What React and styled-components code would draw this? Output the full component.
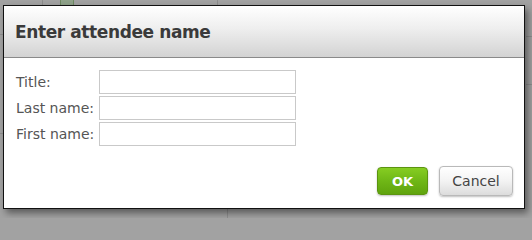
import React from 'react'
import styled, { createGlobalStyle } from 'styled-components'

const GlobalStyle = createGlobalStyle`
  html, body, #root {
    margin: 0;
    padding: 0;
    height: 218px;
    overflow: hidden;
  }
  body {
    width: 532px;
    background: #a2a2a2;
    font-family: "DejaVu Sans", Verdana, sans-serif;
  }
`

const Screen = styled.div`
  position: relative;
  width: 532px;
  height: 218px;
  overflow: hidden;
  background: #a2a2a2;
`

// faint page content showing through the overlay
const Backdrop = styled.div`
  position: absolute;
  inset: 0;
`

const Rule = styled.div`
  position: absolute;
  left: ${p => p.x}px;
  top: ${p => p.y}px;
  width: ${p => p.w || 1}px;
  height: ${p => p.h || 1}px;
  background: #8e8e8e;
`

const TopCard = styled.div`
  position: absolute;
  left: 42px;
  top: -20px;
  width: 174px;
  height: 30px;
  border: 1px solid #8c8c8c;
  border-radius: 6px;
`

const GreenTab = styled.div`
  position: absolute;
  left: 60px;
  top: -4px;
  width: 12px;
  height: 9px;
  border: 1px solid #6e8a62;
  background: #8fa28a;
`

const Dialog = styled.div`
  position: absolute;
  left: 3px;
  top: 5px;
  width: 520px;
  height: 202px;
  border: 1px solid #111;
  background: #fff;
  display: flex;
  flex-direction: column;
  box-shadow: 3px 4px 7px rgba(0, 0, 0, 0.45);
`

const Header = styled.div`
  height: 52px;
  border-bottom: 1px solid #8a8a8a;
  background: linear-gradient(to bottom, #ffffff 0%, #eeeeee 45%, #d3d3d3 100%);
  display: flex;
  align-items: center;
  padding-left: 11px;
  padding-top: 1px;
  box-sizing: border-box;
  flex-shrink: 0;
`

const Title = styled.h1`
  margin: 0;
  font-size: 17px;
  font-weight: bold;
  color: #3a3a3a;
  letter-spacing: -0.4px;
`

const Body = styled.div`
  flex: 1;
  display: flex;
  flex-direction: column;
  padding: 12px 11px 12px 12px;
`

const Form = styled.div`
  display: grid;
  grid-template-columns: 83px 197px;
  row-gap: 2px;
  align-items: center;
`

const Label = styled.label`
  font-size: 14px;
  color: #555;
  line-height: 24px;
  white-space: nowrap;
`

const Field = styled.input`
  box-sizing: border-box;
  width: 197px;
  height: 24px;
  margin: 0;
  border: 1px solid #c9c9c9;
  padding: 2px 4px;
  font: 13px "DejaVu Sans", sans-serif;
  outline: none;
`

const Footer = styled.div`
  margin-top: auto;
  display: flex;
  justify-content: flex-end;
  align-items: center;
  gap: 11px;
`

const Button = styled.button`
  box-sizing: border-box;
  height: ${p => (p.primary ? 28 : 30)}px;
  width: ${p => (p.primary ? 51 : 74)}px;
  border-radius: 4px;
  font-family: "DejaVu Sans", sans-serif;
  font-size: ${p => (p.primary ? 13 : 14)}px;
  font-weight: ${p => (p.primary ? 'bold' : 'normal')};
  color: ${p => (p.primary ? '#fff' : '#444')};
  border: 1px solid ${p => (p.primary ? '#5b9410' : '#b9b9b9')};
  background: ${p =>
    p.primary
      ? 'linear-gradient(to bottom, #86cd22 0%, #6fb716 50%, #5fa30d 100%)'
      : 'linear-gradient(to bottom, #ffffff 0%, #f3f3f3 50%, #dcdcdc 100%)'};
  box-shadow: 0 1px 2px rgba(0, 0, 0, 0.25);
  padding: 0;
  cursor: pointer;
`

export default function App() {
  return (
    <Screen>
      <GlobalStyle />
      <Backdrop>
        <TopCard />
        <GreenTab />
        <Rule x={0} y={34} w={4} />
        <Rule x={526} y={36} w={6} />
        <Rule x={526} y={84} w={6} />
        <Rule x={0} y={133} w={4} />
        <Rule x={227} y={209} h={9} />
      </Backdrop>
      <Dialog>
        <Header>
          <Title>Enter attendee name</Title>
        </Header>
        <Body>
          <Form>
            <Label htmlFor="title">Title:</Label>
            <Field id="title" />
            <Label htmlFor="last">Last name:</Label>
            <Field id="last" />
            <Label htmlFor="first">First name:</Label>
            <Field id="first" />
          </Form>
          <Footer>
            <Button primary>OK</Button>
            <Button>Cancel</Button>
          </Footer>
        </Body>
      </Dialog>
    </Screen>
  )
}
